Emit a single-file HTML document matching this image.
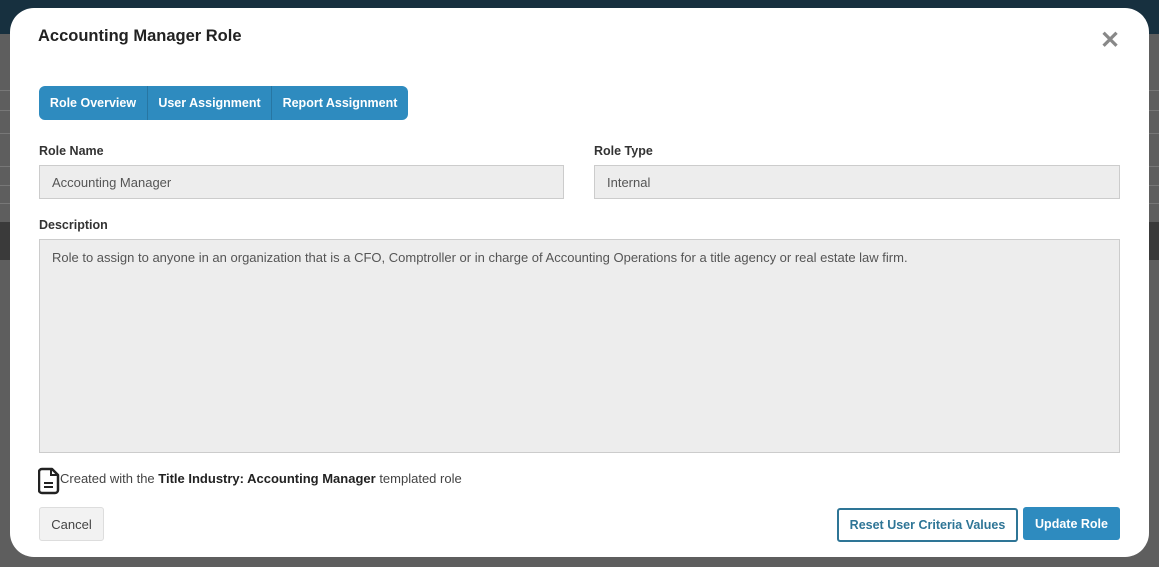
<!DOCTYPE html>
<html><head><meta charset="utf-8"><style>
*{box-sizing:border-box;margin:0;padding:0}
body{width:1159px;height:567px;overflow:hidden;background:#5e5e5e;font-family:"Liberation Sans",sans-serif;position:relative}
.nav{position:absolute;left:0;top:0;width:1159px;height:34px;background:#17303f}
.l{position:absolute;left:0;width:1159px;height:1px;background:#777}
.dk{position:absolute;left:0;top:222px;width:1159px;height:38px;background:#3a3a3a}
.modal{position:absolute;left:10px;top:8px;width:1139px;height:549px;background:#fff;border-radius:24px}
.abs{position:absolute}
h1{position:absolute;left:28px;top:19px;font-size:16.5px;font-weight:bold;color:#222}
.x{position:absolute;left:1090px;top:18px;font-size:24px;color:#888;font-weight:bold}
.tabs{position:absolute;left:29px;top:78px;height:34px;width:369px;background:#2e8bbf;border-radius:6px;display:flex;color:#fff;font-size:12.5px;font-weight:bold}
.tabs div{display:flex;align-items:center;justify-content:center;border-right:1px solid #2776a3}
.lab{position:absolute;font-size:12.5px;font-weight:bold;color:#333}
.inp{position:absolute;background:#ededed;border:1px solid #ccc;font-size:13px;color:#555;padding-left:12px}
.btn{position:absolute;font-size:12.5px;display:flex;align-items:center;justify-content:center;border-radius:3px}
</style></head><body>
<div class="nav"></div>
<div class="l" style="top:90px"></div><div class="l" style="top:110px"></div><div class="l" style="top:133px"></div><div class="l" style="top:166px"></div><div class="l" style="top:185px"></div><div class="l" style="top:203px"></div>
<div class="dk"></div>
<div class="modal">
<h1>Accounting Manager Role</h1>
<div class="x">✕</div>
<div class="tabs"><div style="width:109px">Role Overview</div><div style="width:124px">User Assignment</div><div style="width:136px;border:none">Report Assignment</div></div>
<div class="lab" style="left:29px;top:136px">Role Name</div>
<div class="lab" style="left:584px;top:136px">Role Type</div>
<div class="inp" style="left:29px;top:157px;width:525px;height:34px;line-height:33px">Accounting Manager</div>
<div class="inp" style="left:584px;top:157px;width:526px;height:34px;line-height:33px">Internal</div>
<div class="lab" style="left:29px;top:210px">Description</div>
<div class="inp" style="left:29px;top:231px;width:1081px;height:214px;padding-top:10px">Role to assign to anyone in an organization that is a CFO, Comptroller or in charge of Accounting Operations for a title agency or real estate law firm.</div>
<svg class="abs" style="left:28px;top:459px" width="22" height="28" viewBox="0 0 22 28"><path d="M4 2h10l6 6v15a3 3 0 0 1-3 3H4a3 3 0 0 1-3-3V5a3 3 0 0 1 3-3z" fill="none" stroke="#222" stroke-width="2.5" stroke-linejoin="round"/><path d="M13 2v6h7" fill="none" stroke="#222" stroke-width="2"/><path d="M6 16h9M6 20h9" stroke="#222" stroke-width="2"/></svg>
<div class="abs" style="left:50px;top:463px;font-size:13px;color:#444">Created with the <b style="color:#222">Title Industry: Accounting Manager</b> templated role</div>
<div class="btn" style="left:29px;top:499px;width:65px;height:34px;background:#f2f2f2;border:1px solid #ddd;color:#444;font-size:13px">Cancel</div>
<div class="btn" style="left:827px;top:500px;width:181px;height:34px;border:2px solid #2e7596;color:#2e7596;font-weight:bold">Reset User Criteria Values</div>
<div class="btn" style="left:1013px;top:499px;width:97px;height:33px;background:#2e8bbf;color:#fff;font-weight:bold">Update Role</div>
</div>
</body></html>
